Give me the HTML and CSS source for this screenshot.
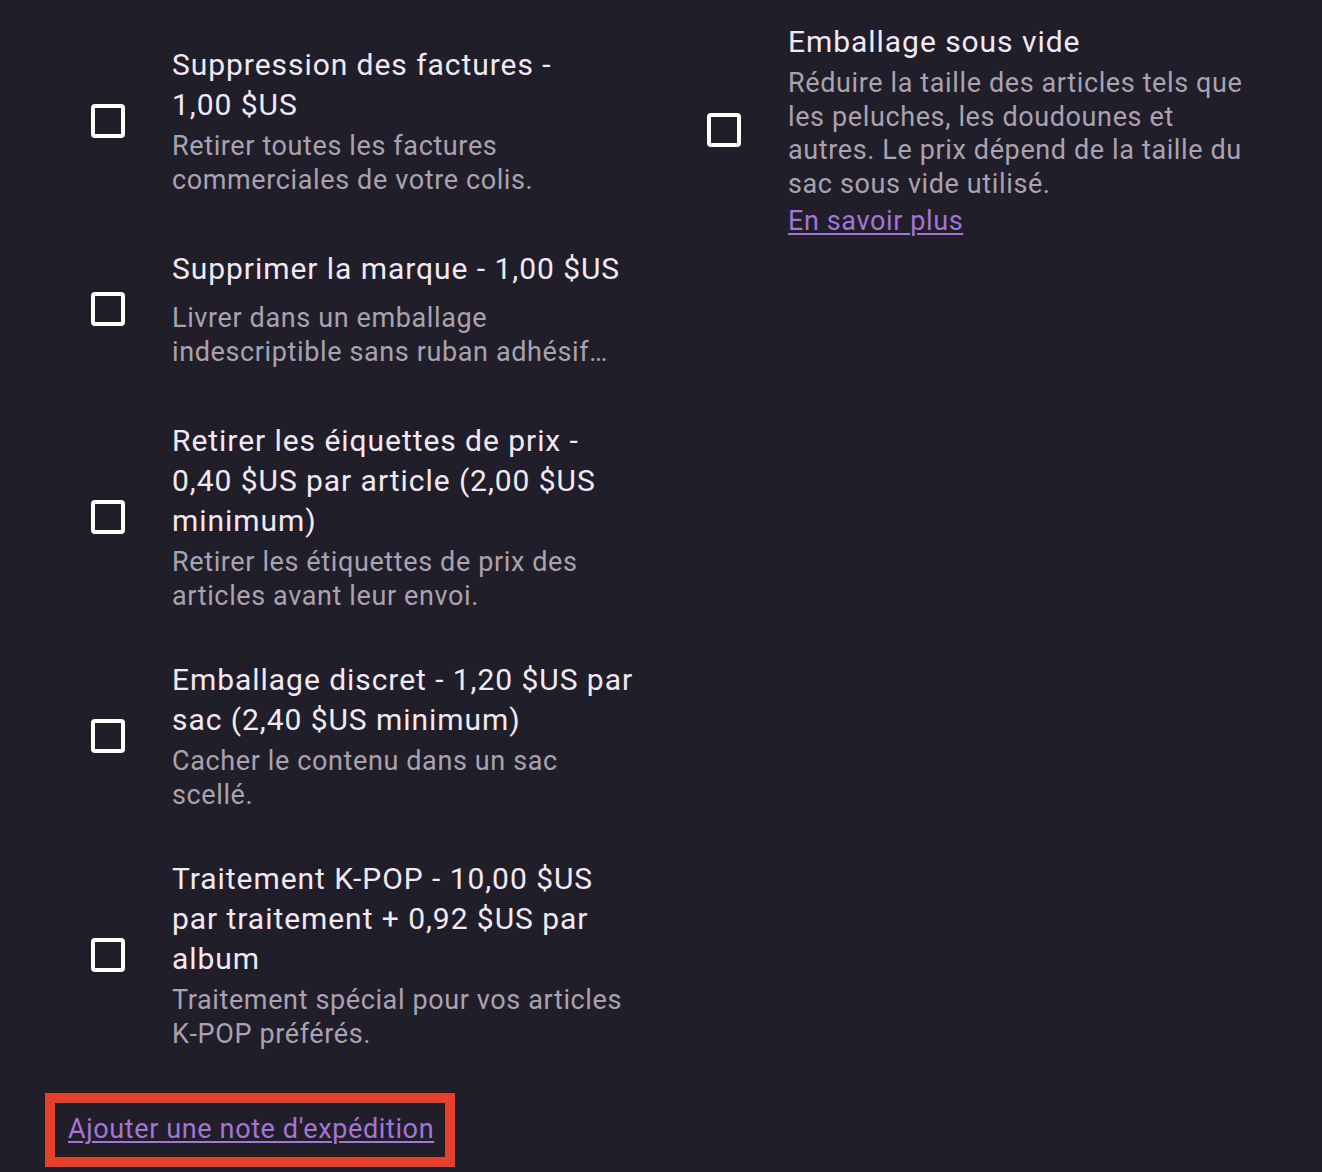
FILE: index.html
```html
<!DOCTYPE html>
<html lang="fr">
<head>
<meta charset="utf-8">
<title>Options d'expédition</title>
<link rel="stylesheet" href="styles.css">
</head>
<body>
<main class="page">
  <div class="options">
    <div class="col col-left">
      <label class="option">
        <span class="box-wrap"><span class="box"></span></span>
        <span class="text">
          <span class="title">Suppression des factures - 1,00&nbsp;$US</span>
          <span class="desc">Retirer toutes les factures commerciales de votre colis.</span>
        </span>
      </label>
      <label class="option">
        <span class="box-wrap"><span class="box"></span></span>
        <span class="text">
          <span class="title title-spaced">Supprimer la marque - 1,00&nbsp;$US</span>
          <span class="desc">Livrer dans un emballage indescriptible sans ruban adhésif…</span>
        </span>
      </label>
      <label class="option">
        <span class="box-wrap"><span class="box"></span></span>
        <span class="text">
          <span class="title">Retirer les éiquettes de prix - 0,40&nbsp;$US par article (2,00&nbsp;$US minimum)</span>
          <span class="desc">Retirer les étiquettes de prix des articles avant leur envoi.</span>
        </span>
      </label>
      <label class="option option-tight">
        <span class="box-wrap"><span class="box"></span></span>
        <span class="text">
          <span class="title">Emballage discret - 1,20&nbsp;$US par sac (2,40&nbsp;$US minimum)</span>
          <span class="desc">Cacher le contenu dans un sac scellé.</span>
        </span>
      </label>
      <label class="option option-tight">
        <span class="box-wrap"><span class="box"></span></span>
        <span class="text">
          <span class="title">Traitement K-POP - 10,00&nbsp;$US par traitement + 0,92&nbsp;$US par album</span>
          <span class="desc">Traitement spécial pour vos articles K&#8209;POP préférés.</span>
        </span>
      </label>
    </div>
    <div class="col col-right">
      <label class="option">
        <span class="box-wrap"><span class="box"></span></span>
        <span class="text">
          <span class="title">Emballage sous vide</span>
          <span class="desc">Réduire la taille des articles tels que les peluches, les doudounes et autres. Le prix dépend de la taille du sac sous vide utilisé.</span>
          <a class="link link-more" href="#">En savoir plus</a>
        </span>
      </label>
    </div>
  </div>
  <div class="note">
    <a class="link note-link" href="#">Ajouter une note d'expédition</a>
  </div>
</main>
</body>
</html>
```

FILE: styles.css
```css
html, body {
  margin: 0;
  padding: 0;
  background: #201f29;
}

body {
  font-family: Roboto, "Noto Sans", sans-serif;
  color: #f2e8f6;
  height: 1172px;
  overflow: hidden;
}

.page {
  padding-top: 22px;
}

.options {
  display: grid;
  grid-template-columns: 545px 545px;
  column-gap: 71px;
  padding-left: 91px;
  align-items: start;
}

.col {
  display: flex;
  flex-direction: column;
  gap: 52px;
}

.col-left {
  padding-top: 23px;
}

.option {
  display: flex;
  align-items: center;
}

.option-tight {
  margin-top: -5px;
}

.box-wrap {
  flex: 0 0 81px;
  display: flex;
  align-items: center;
}

.box {
  width: 34px;
  height: 34px;
  box-sizing: border-box;
  border: 4px solid #ffffff;
  border-radius: 4px;
}

.text {
  width: 464px;
  display: flex;
  flex-direction: column;
  align-items: flex-start;
}

.title {
  font-size: 30px;
  line-height: 40px;
  letter-spacing: 0.95px;
  color: #f2e8f6;
  margin-bottom: 5px;
}

.title-spaced {
  margin-bottom: 13px;
}

.desc {
  font-size: 27px;
  line-height: 33.5px;
  letter-spacing: 0.62px;
  color: #aba2b1;
}

.link {
  font-size: 27px;
  line-height: 33.5px;
  letter-spacing: 0.62px;
  color: #a574d6;
  text-decoration: underline;
  text-underline-offset: 3px;
  text-decoration-thickness: 2px;
}

.link-more {
  margin-top: 4px;
}

.note {
  margin-top: 42px;
  padding-left: 45px;
}

.note-link {
  display: inline-block;
  border: 10px solid #e5402a;
  padding: 10px 11px 10px 13px;
}
```
